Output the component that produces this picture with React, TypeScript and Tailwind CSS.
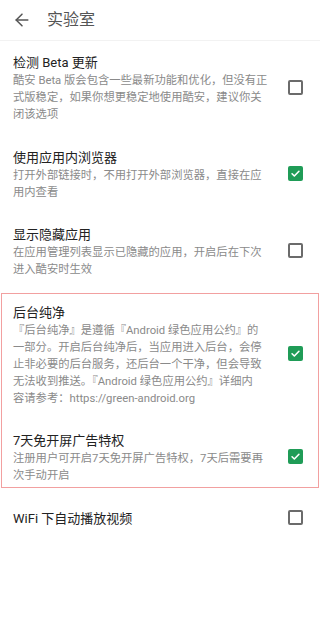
import React from "react";

const FONT = { fontFamily: "Roboto, 'Noto Sans CJK SC', 'Noto Sans', sans-serif" };

function Box({ checked }: { checked: boolean }) {
  if (checked) {
    return (
      <div className="w-[15px] h-[15px] rounded-[2px] bg-[#1f9c57] flex items-center justify-center shrink-0 mb-[3px]">
        <svg width="11" height="11" viewBox="0 0 24 24" fill="none" stroke="#ffffff" strokeWidth="3.4" strokeLinecap="round" strokeLinejoin="round">
          <path d="M4.5 12.5l5 5L19.5 7" />
        </svg>
      </div>
    );
  }
  return <div className="w-[15px] h-[15px] rounded-[2px] border-2 border-[#6b6b6b] shrink-0 mb-[3px]" />;
}

function Item({ title, lines, checked }: { title: string; lines: string[]; checked: boolean }) {
  return (
    <div className="flex items-center pl-[13px] pr-[17px] pt-[13px] pb-[12.5px]">
      <div className="flex-1 min-w-0">
        <div className="text-[13px] leading-[18px] text-[#222222] whitespace-nowrap">{title}</div>
        {lines.map((l, i) => (
          <div key={i} className="text-[11.3px] leading-[17px] text-[#8a8a8a] whitespace-nowrap">
            {l}
          </div>
        ))}
      </div>
      <Box checked={checked} />
    </div>
  );
}

export default function App() {
  return (
    <div className="w-[320px] h-[630px] bg-white overflow-hidden" style={FONT}>
      <div className="h-[41px] flex items-center pl-[12px] border-b border-[#f2f2f2]">
        <svg width="20" height="20" viewBox="0 0 24 24" fill="none" stroke="#555555" strokeWidth="1.8" strokeLinecap="round" strokeLinejoin="round">
          <path d="M19 12H5" />
          <path d="M12 19l-7-7 7-7" />
        </svg>
        <div className="ml-[15px] text-[16px] leading-[20px] text-[#555555]">实验室</div>
      </div>
      <Item
        title="检测 Beta 更新"
        lines={[
          "酷安 Beta 版会包含一些最新功能和优化，但没有正",
          "式版稳定，如果你想更稳定地使用酷安，建议你关",
          "闭该选项",
        ]}
        checked={false}
      />
      <Item
        title="使用应用内浏览器"
        lines={["打开外部链接时，不用打开外部浏览器，直接在应", "用内查看"]}
        checked={true}
      />
      <Item
        title="显示隐藏应用"
        lines={["在应用管理列表显示已隐藏的应用，开启后在下次", "进入酷安时生效"]}
        checked={false}
      />
      <div className="relative">
        <div className="absolute top-[2px] bottom-[9px] left-[1px] right-[1px] border border-[#f2a0a0] pointer-events-none" />
        <Item
          title="后台纯净"
          lines={[
            "『后台纯净』是遵循『Android 绿色应用公约』的",
            "一部分。开启后台纯净后，当应用进入后台，会停",
            "止非必要的后台服务，还后台一个干净，但会导致",
            "无法收到推送。『Android 绿色应用公约』详细内",
            "容请参考：https://green-android.org",
          ]}
          checked={true}
        />
        <Item
          title="7天免开屏广告特权"
          lines={["注册用户可开启7天免开屏广告特权，7天后需要再", "次手动开启"]}
          checked={true}
        />
      </div>
      <Item title="WiFi 下自动播放视频" lines={[]} checked={false} />
    </div>
  );
}
